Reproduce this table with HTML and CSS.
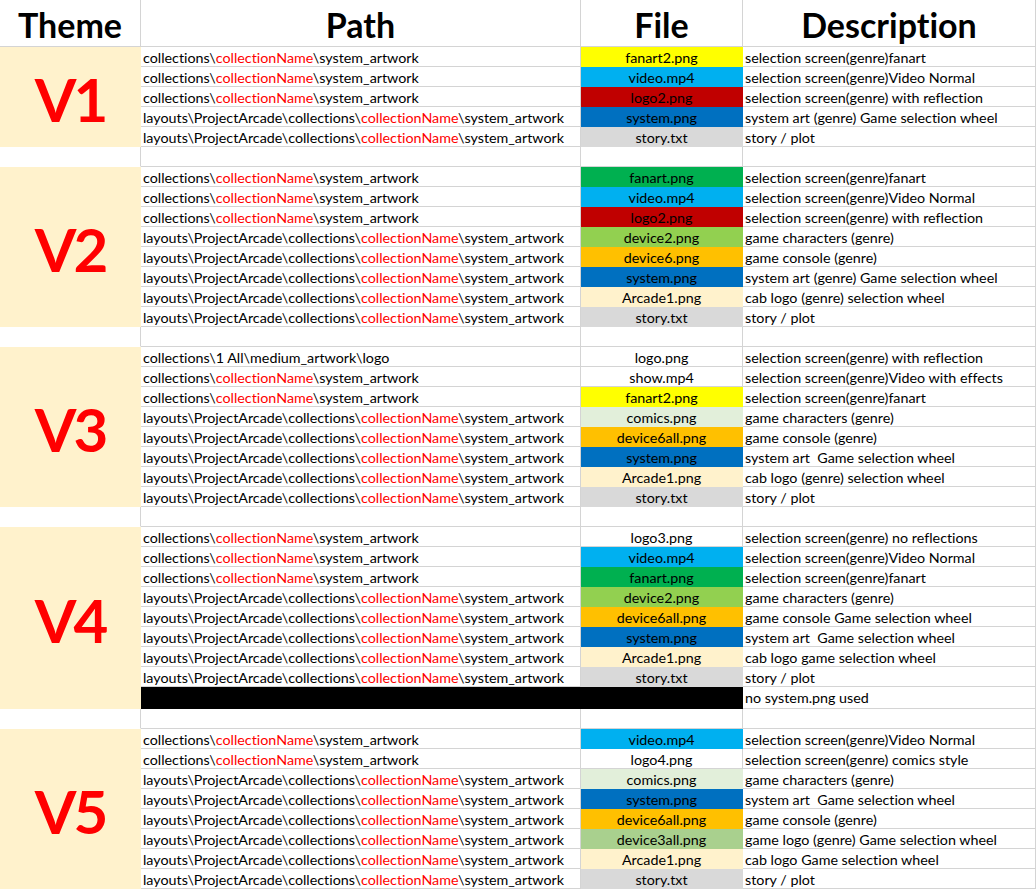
FILE: index.html
```html
<!DOCTYPE html>
<html>
<head>
<meta charset="utf-8">
<link rel="stylesheet" href="styles.css">
</head>
<body>
<div class="sheet">
  <div class="c h">Theme</div><div class="c h">Path</div><div class="c h">File</div><div class="c h">Description</div>

  <div class="c theme span5">V1</div>
  <div class="c p">collections\<span class="r">collectionName</span>\system_artwork</div><div class="c f yellow">fanart2.png</div><div class="c d">selection screen(genre)fanart</div>
  <div class="c p">collections\<span class="r">collectionName</span>\system_artwork</div><div class="c f sky">video.mp4</div><div class="c d">selection screen(genre)Video Normal</div>
  <div class="c p">collections\<span class="r">collectionName</span>\system_artwork</div><div class="c f dred">logo2.png</div><div class="c d">selection screen(genre) with reflection</div>
  <div class="c p">layouts\ProjectArcade\collections\<span class="r">collectionName</span>\system_artwork</div><div class="c f blue">system.png</div><div class="c d">system art (genre) Game selection wheel</div>
  <div class="c p">layouts\ProjectArcade\collections\<span class="r">collectionName</span>\system_artwork</div><div class="c f grey">story.txt</div><div class="c d">story / plot</div>

  <div class="c blank-theme"></div><div class="c p"></div><div class="c f"></div><div class="c d"></div>

  <div class="c theme span8">V2</div>
  <div class="c p">collections\<span class="r">collectionName</span>\system_artwork</div><div class="c f green">fanart.png</div><div class="c d">selection screen(genre)fanart</div>
  <div class="c p">collections\<span class="r">collectionName</span>\system_artwork</div><div class="c f sky">video.mp4</div><div class="c d">selection screen(genre)Video Normal</div>
  <div class="c p">collections\<span class="r">collectionName</span>\system_artwork</div><div class="c f dred">logo2.png</div><div class="c d">selection screen(genre) with reflection</div>
  <div class="c p">layouts\ProjectArcade\collections\<span class="r">collectionName</span>\system_artwork</div><div class="c f lgreen">device2.png</div><div class="c d">game characters (genre)</div>
  <div class="c p">layouts\ProjectArcade\collections\<span class="r">collectionName</span>\system_artwork</div><div class="c f gold">device6.png</div><div class="c d">game console (genre)</div>
  <div class="c p">layouts\ProjectArcade\collections\<span class="r">collectionName</span>\system_artwork</div><div class="c f blue">system.png</div><div class="c d">system art (genre) Game selection wheel</div>
  <div class="c p">layouts\ProjectArcade\collections\<span class="r">collectionName</span>\system_artwork</div><div class="c f cream">Arcade1.png</div><div class="c d">cab logo (genre) selection wheel</div>
  <div class="c p">layouts\ProjectArcade\collections\<span class="r">collectionName</span>\system_artwork</div><div class="c f grey">story.txt</div><div class="c d">story / plot</div>

  <div class="c blank-theme"></div><div class="c p"></div><div class="c f"></div><div class="c d"></div>

  <div class="c theme span8">V3</div>
  <div class="c p">collections\1 All\medium_artwork\logo</div><div class="c f">logo.png</div><div class="c d">selection screen(genre) with reflection</div>
  <div class="c p">collections\<span class="r">collectionName</span>\system_artwork</div><div class="c f">show.mp4</div><div class="c d">selection screen(genre)Video with effects</div>
  <div class="c p">collections\<span class="r">collectionName</span>\system_artwork</div><div class="c f yellow">fanart2.png</div><div class="c d">selection screen(genre)fanart</div>
  <div class="c p">layouts\ProjectArcade\collections\<span class="r">collectionName</span>\system_artwork</div><div class="c f mint">comics.png</div><div class="c d">game characters (genre)</div>
  <div class="c p">layouts\ProjectArcade\collections\<span class="r">collectionName</span>\system_artwork</div><div class="c f gold">device6all.png</div><div class="c d">game console (genre)</div>
  <div class="c p">layouts\ProjectArcade\collections\<span class="r">collectionName</span>\system_artwork</div><div class="c f blue">system.png</div><div class="c d">system art  Game selection wheel</div>
  <div class="c p">layouts\ProjectArcade\collections\<span class="r">collectionName</span>\system_artwork</div><div class="c f cream">Arcade1.png</div><div class="c d">cab logo (genre) selection wheel</div>
  <div class="c p">layouts\ProjectArcade\collections\<span class="r">collectionName</span>\system_artwork</div><div class="c f grey">story.txt</div><div class="c d">story / plot</div>

  <div class="c blank-theme"></div><div class="c p"></div><div class="c f"></div><div class="c d"></div>

  <div class="c theme span9">V4</div>
  <div class="c p">collections\<span class="r">collectionName</span>\system_artwork</div><div class="c f">logo3.png</div><div class="c d">selection screen(genre) no reflections</div>
  <div class="c p">collections\<span class="r">collectionName</span>\system_artwork</div><div class="c f sky">video.mp4</div><div class="c d">selection screen(genre)Video Normal</div>
  <div class="c p">collections\<span class="r">collectionName</span>\system_artwork</div><div class="c f green">fanart.png</div><div class="c d">selection screen(genre)fanart</div>
  <div class="c p">layouts\ProjectArcade\collections\<span class="r">collectionName</span>\system_artwork</div><div class="c f lgreen">device2.png</div><div class="c d">game characters (genre)</div>
  <div class="c p">layouts\ProjectArcade\collections\<span class="r">collectionName</span>\system_artwork</div><div class="c f gold">device6all.png</div><div class="c d">game console Game selection wheel</div>
  <div class="c p">layouts\ProjectArcade\collections\<span class="r">collectionName</span>\system_artwork</div><div class="c f blue">system.png</div><div class="c d">system art  Game selection wheel</div>
  <div class="c p">layouts\ProjectArcade\collections\<span class="r">collectionName</span>\system_artwork</div><div class="c f cream">Arcade1.png</div><div class="c d">cab logo game selection wheel</div>
  <div class="c p">layouts\ProjectArcade\collections\<span class="r">collectionName</span>\system_artwork</div><div class="c f grey">story.txt</div><div class="c d">story / plot</div>
  <div class="c black"></div><div class="c d">no system.png used</div>

  <div class="c blank-theme"></div><div class="c p"></div><div class="c f"></div><div class="c d"></div>

  <div class="c theme span8">V5</div>
  <div class="c p">collections\<span class="r">collectionName</span>\system_artwork</div><div class="c f sky">video.mp4</div><div class="c d">selection screen(genre)Video Normal</div>
  <div class="c p">collections\<span class="r">collectionName</span>\system_artwork</div><div class="c f">logo4.png</div><div class="c d">selection screen(genre) comics style</div>
  <div class="c p">layouts\ProjectArcade\collections\<span class="r">collectionName</span>\system_artwork</div><div class="c f mint">comics.png</div><div class="c d">game characters (genre)</div>
  <div class="c p">layouts\ProjectArcade\collections\<span class="r">collectionName</span>\system_artwork</div><div class="c f blue">system.png</div><div class="c d">system art  Game selection wheel</div>
  <div class="c p">layouts\ProjectArcade\collections\<span class="r">collectionName</span>\system_artwork</div><div class="c f gold">device6all.png</div><div class="c d">game console (genre)</div>
  <div class="c p">layouts\ProjectArcade\collections\<span class="r">collectionName</span>\system_artwork</div><div class="c f sage">device3all.png</div><div class="c d">game logo (genre) Game selection wheel</div>
  <div class="c p">layouts\ProjectArcade\collections\<span class="r">collectionName</span>\system_artwork</div><div class="c f cream">Arcade1.png</div><div class="c d">cab logo Game selection wheel</div>
  <div class="c p">layouts\ProjectArcade\collections\<span class="r">collectionName</span>\system_artwork</div><div class="c f grey">story.txt</div><div class="c d">story / plot</div>
</div>
</body>
</html>
```

FILE: styles.css
```css
html, body {
  margin: 0;
  padding: 0;
  background: #ffffff;
}

.sheet {
  display: grid;
  grid-template-columns: 141px 440px 162px 293px;
  grid-template-rows: 47px repeat(32, 20px) 22px repeat(9, 20px);
  font-family: Lato, "Liberation Sans", sans-serif;
  font-size: 14.3px;
  font-variant-ligatures: none;
  font-feature-settings: "liga" 0, "clig" 0;
  color: #000;
}

.c {
  box-sizing: border-box;
  border-right: 1px solid #d4d4d4;
  border-bottom: 1px solid #d4d4d4;
  white-space: pre;
  overflow: hidden;
  line-height: 21px;
}

.h {
  display: flex;
  align-items: flex-end;
  justify-content: center;
  font-weight: 700;
  font-size: 34px;
  line-height: 42px;
  padding-bottom: 0;
}

.p, .d {
  padding-left: 2px;
}

.f {
  text-align: center;
}

.r {
  color: #ff0000;
}

.theme {
  display: flex;
  align-items: center;
  justify-content: center;
  background: #fff2cc;
  border-color: #fff2cc;
  color: #ff0000;
  font-weight: 700;
  font-size: 60px;
  letter-spacing: -3px;
  line-height: 60px;
  padding-top: 4px;
}

.span5 { grid-row: span 5; }
.span8 { grid-row: span 8; }
.span9 { grid-row: span 9; }

.blank-theme {
  border-bottom-color: #ffffff;
}

.black {
  grid-column: span 2;
  background: #000;
  border-color: #000;
}

.yellow { background: #ffff00; border-color: #ffff00; }
.sky    { background: #00b0f0; border-color: #00b0f0; }
.dred   { background: #c00000; border-color: #c00000; }
.blue   { background: #0070c0; border-color: #0070c0; }
.grey   { background: #d9d9d9; border-color: #d9d9d9; }
.green  { background: #00b050; border-color: #00b050; }
.lgreen { background: #92d050; border-color: #92d050; }
.gold   { background: #ffc000; border-color: #ffc000; }
.cream  { background: #fff2cc; border-color: #fff2cc; }
.mint   { background: #e2efda; border-color: #e2efda; }
.sage   { background: #a9d08e; border-color: #a9d08e; }
```
